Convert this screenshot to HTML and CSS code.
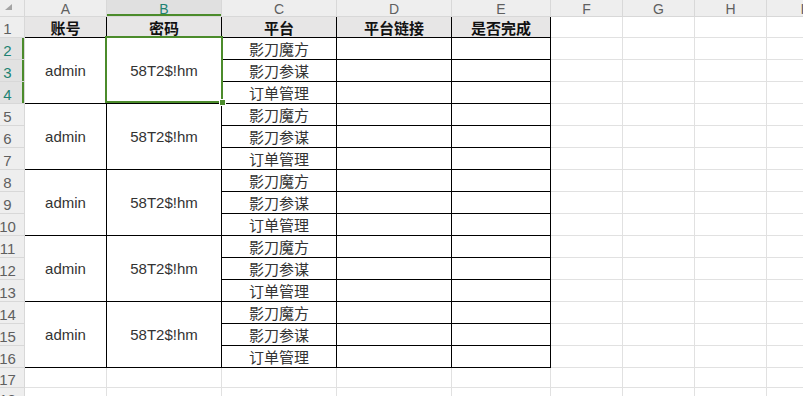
FILE: index.html
```html
<!DOCTYPE html>
<html lang="zh-CN">
<head>
    <meta charset="UTF-8">
    <title>账号表</title>
    <link rel="stylesheet" href="styles.css">
</head>
<body>

<div class="sheet">
    <!-- column headers -->
    <div class="corner"><svg width="7" height="6" viewBox="0 0 7 6"><polygon points="7,0 7,6 0,6" fill="#a4a4a4"/></svg></div>
    <div class="col">A</div>
    <div class="col sel">B</div>
    <div class="col">C</div>
    <div class="col">D</div>
    <div class="col">E</div>
    <div class="col">F</div>
    <div class="col">G</div>
    <div class="col">H</div>
    <div class="col">I</div>

    <!-- row 1 -->
    <div class="row">1</div>
    <div class="t h">账号</div>
    <div class="t h">密码</div>
    <div class="t h">平台</div>
    <div class="t h">平台链接</div>
    <div class="t h">是否完成</div>
    <div class="c"></div><div class="c"></div><div class="c"></div><div class="c"></div>

    <!-- rows 2-4 -->
    <div class="row sel">2</div>
    <div class="t m">admin</div>
    <div class="t m">58T2$!hm</div>
    <div class="t">影刀魔方</div><div class="t"></div><div class="t"></div>
    <div class="c"></div><div class="c"></div><div class="c"></div><div class="c"></div>
    <div class="row sel">3</div>
    <div class="t">影刀参谋</div><div class="t"></div><div class="t"></div>
    <div class="c"></div><div class="c"></div><div class="c"></div><div class="c"></div>
    <div class="row sel">4</div>
    <div class="t">订单管理</div><div class="t"></div><div class="t"></div>
    <div class="c"></div><div class="c"></div><div class="c"></div><div class="c"></div>

    <!-- rows 5-7 -->
    <div class="row">5</div>
    <div class="t m">admin</div>
    <div class="t m">58T2$!hm</div>
    <div class="t">影刀魔方</div><div class="t"></div><div class="t"></div>
    <div class="c"></div><div class="c"></div><div class="c"></div><div class="c"></div>
    <div class="row">6</div>
    <div class="t">影刀参谋</div><div class="t"></div><div class="t"></div>
    <div class="c"></div><div class="c"></div><div class="c"></div><div class="c"></div>
    <div class="row">7</div>
    <div class="t">订单管理</div><div class="t"></div><div class="t"></div>
    <div class="c"></div><div class="c"></div><div class="c"></div><div class="c"></div>

    <!-- rows 8-10 -->
    <div class="row">8</div>
    <div class="t m">admin</div>
    <div class="t m">58T2$!hm</div>
    <div class="t">影刀魔方</div><div class="t"></div><div class="t"></div>
    <div class="c"></div><div class="c"></div><div class="c"></div><div class="c"></div>
    <div class="row">9</div>
    <div class="t">影刀参谋</div><div class="t"></div><div class="t"></div>
    <div class="c"></div><div class="c"></div><div class="c"></div><div class="c"></div>
    <div class="row">10</div>
    <div class="t">订单管理</div><div class="t"></div><div class="t"></div>
    <div class="c"></div><div class="c"></div><div class="c"></div><div class="c"></div>

    <!-- rows 11-13 -->
    <div class="row">11</div>
    <div class="t m">admin</div>
    <div class="t m">58T2$!hm</div>
    <div class="t">影刀魔方</div><div class="t"></div><div class="t"></div>
    <div class="c"></div><div class="c"></div><div class="c"></div><div class="c"></div>
    <div class="row">12</div>
    <div class="t">影刀参谋</div><div class="t"></div><div class="t"></div>
    <div class="c"></div><div class="c"></div><div class="c"></div><div class="c"></div>
    <div class="row">13</div>
    <div class="t">订单管理</div><div class="t"></div><div class="t"></div>
    <div class="c"></div><div class="c"></div><div class="c"></div><div class="c"></div>

    <!-- rows 14-16 -->
    <div class="row">14</div>
    <div class="t m">admin</div>
    <div class="t m">58T2$!hm</div>
    <div class="t">影刀魔方</div><div class="t"></div><div class="t"></div>
    <div class="c"></div><div class="c"></div><div class="c"></div><div class="c"></div>
    <div class="row">15</div>
    <div class="t">影刀参谋</div><div class="t"></div><div class="t"></div>
    <div class="c"></div><div class="c"></div><div class="c"></div><div class="c"></div>
    <div class="row">16</div>
    <div class="t">订单管理</div><div class="t"></div><div class="t"></div>
    <div class="c"></div><div class="c"></div><div class="c"></div><div class="c"></div>

    <!-- rows 17-18 -->
    <div class="row">17</div>
    <div class="c"></div><div class="c"></div><div class="c"></div><div class="c"></div><div class="c"></div>
    <div class="c"></div><div class="c"></div><div class="c"></div><div class="c"></div>
    <div class="row">18</div>
    <div class="c"></div><div class="c"></div><div class="c"></div><div class="c"></div><div class="c"></div>
    <div class="c"></div><div class="c"></div><div class="c"></div><div class="c"></div>

    <!-- active cell B2:B4 -->
    <div class="selection"><span class="handle"></span></div>
</div>

</body>
</html>
```

FILE: styles.css
```css
* { margin: 0; padding: 0; box-sizing: border-box; }
body { background: #fff; overflow: hidden; font-family: 'Liberation Sans', 'Noto Sans CJK SC', sans-serif; color: #333; }

.sheet {
    position: relative;
    display: grid;
    grid-template-columns: 25px 82px 115px 115px 115px 99px 72px 72px 72px 72px;
    grid-template-rows: 17px 21px repeat(15, 22px) 20px 20px;
    width: 839px;
}
.sheet > div {
    border-right: 1px solid #e1e1e1; border-bottom: 1px solid #e1e1e1;
    display: flex; align-items: center; justify-content: center;
    font-size: 15px; white-space: nowrap;
}

.sheet > .corner {
    background: #eeeeee; border-color: #d8d8d8;
    align-items: flex-start; justify-content: flex-start; padding: 4px 0 0 5px;
}
.sheet > .col { background: #eeeeee; border-color: #d8d8d8; color: #5f5f5f; font-size: 14px; padding-top: 1px; }
.sheet > .col.sel { background: #e0e0e0; color: #1e8272; box-shadow: inset 0 -2px 0 #4b8b2b; }
.sheet > .row {
    background: #eeeeee; border-color: #d8d8d8; color: #5f5f5f;
    padding: 3px 9px 0 0; font-size: 15px;
}
.sheet > .row.sel { background: #e2e2e2; color: #1e8272; box-shadow: inset -2px 0 0 #4b8b2b; }

.sheet > .t { border-color: #000; }
.sheet > .h { background: #e7e6e6; font-weight: bold; color: #111; }
.sheet > .m { grid-row: span 3; }

.sheet > .selection {
    position: absolute; left: 105px; top: 36px; width: 118px; height: 67px;
    display: block; border: 2px solid #4b8b2b; pointer-events: none;
}
.handle {
    position: absolute; right: -5px; bottom: -5px; width: 7px; height: 7px;
    background: #4b8b2b; border: 1px solid #fff;
}
```
